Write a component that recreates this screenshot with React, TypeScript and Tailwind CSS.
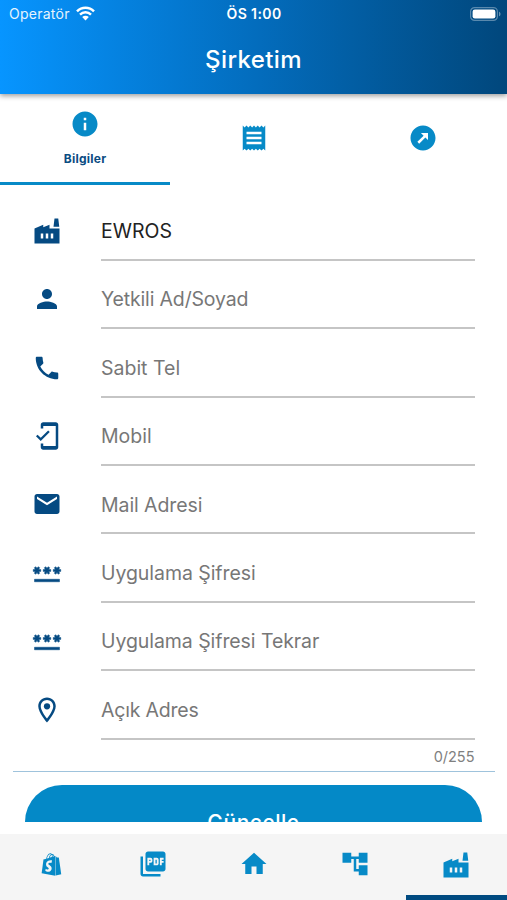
import type { IconType } from "react-icons";
import {
  MdInfo, MdReceipt, MdOutbound, MdFactory, MdPerson, MdPhone, MdMobileFriendly, MdEmail,
  MdPassword, MdOutlineLocationOn, MdPictureAsPdf, MdHome, MdAccountTree,
} from "react-icons/md";
import { FaShopify } from "react-icons/fa";

const fields: { icon: IconType; label: string; filled?: boolean; bold?: boolean; spacing: string }[] = [
  { icon: MdFactory, label: "EWROS", filled: true, spacing: "tracking-[0px]" },
  { icon: MdPerson, label: "Yetkili Ad/Soyad", spacing: "tracking-[-0.16px]" },
  { icon: MdPhone, label: "Sabit Tel", spacing: "tracking-[0px]" },
  { icon: MdMobileFriendly, label: "Mobil", spacing: "tracking-[0px]" },
  { icon: MdEmail, label: "Mail Adresi", spacing: "tracking-[-0.08px]" },
  { icon: MdPassword, label: "Uygulama Şifresi", bold: true, spacing: "tracking-[-0.06px]" },
  { icon: MdPassword, label: "Uygulama Şifresi Tekrar", bold: true, spacing: "tracking-[-0.07px]" },
  { icon: MdOutlineLocationOn, label: "Açık Adres", spacing: "tracking-[-0.2px]" },
];

const tabs: { icon: IconType; label?: string }[] = [
  { icon: MdInfo, label: "Bilgiler" },
  { icon: MdReceipt },
  { icon: MdOutbound },
];

const nav: IconType[] = [FaShopify, MdPictureAsPdf, MdHome, MdAccountTree, MdFactory];

function Wifi() {
  return (
    <svg width="19" height="15" viewBox="0 0 19 15" fill="none" stroke="white" strokeWidth="2.5">
      <path d="M1 5.4C5.8.6 13.2.6 18 5.4" />
      <path d="M4 8.6c3.1-3 7.9-3 11 0" />
      <path d="M6.2 11.1c1.9-1.7 4.7-1.7 6.6 0L9.5 14.4Z" fill="white" stroke="none" />
    </svg>
  );
}

function Battery() {
  return (
    <svg width="31" height="14" viewBox="0 0 31 14">
      <rect x=".6" y=".6" width="26.8" height="12.8" rx="4" fill="none" stroke="white" strokeOpacity=".35" strokeWidth="1.2" />
      <rect x="2.6" y="2.4" width="22.8" height="9.2" rx="2.3" fill="white" />
      <path d="M29 4.7c2 .7 2 3.9 0 4.6Z" fill="white" fillOpacity=".4" />
    </svg>
  );
}

export default function App() {
  return (
    <div className="flex h-[900px] w-[507px] flex-col overflow-hidden bg-white font-['Inter','Liberation_Sans',sans-serif]">
      <header className="z-10 flex h-[94px] shrink-0 flex-col bg-linear-to-r from-[#0795ff] via-[#036dbe] to-[#01477c] text-white shadow-[0_2px_5px_rgba(0,0,0,0.38)]">
        <div className="grid h-[28px] grid-cols-[1fr_auto_1fr] items-center pl-[9px] pr-[6px] text-[13.5px] leading-none">
          <div className="flex items-center gap-[6px]">
            <span className="text-[14px] tracking-[0.25px] opacity-90">Operatör</span>
            <div className="-mt-[2px]"><Wifi /></div>
          </div>
          <span className="-ml-[2px] text-center text-[14px] font-semibold tracking-[0.4px]">ÖS 1:00</span>
          <div className="flex justify-end pb-px"><Battery /></div>
        </div>
        <h1 className="mt-[17px] text-center text-[24px] font-medium leading-[30px] tracking-[0.4px]">Şirketim</h1>
      </header>

      <nav className="grid h-[90.5px] shrink-0 grid-cols-3">
        {tabs.map(({ icon: Icon, label }, i) => (
          <button
            key={i}
            className={
              label
                ? "-mr-px flex flex-col items-center border-b-[3px] border-[#078ac7] pt-[15px]"
                : "flex flex-col items-center pt-[29px]"
            }
          >
            <Icon size={30} color="#078ac7" />
            {label && (
              <span className="mt-[12px] text-[12px] font-bold leading-[15px] tracking-[0.25px] text-[#0b4c82]">
                {label}
              </span>
            )}
          </button>
        ))}
      </nav>

      <main className="flex h-[637.5px] shrink-0 flex-col overflow-hidden pt-2">
        {fields.map(({ icon: Icon, label, filled, bold, spacing }, i) => (
          <div key={i} className="flex h-[68.4px] shrink-0 pl-8 pr-8">
            <div className="flex w-[69px] shrink-0 pt-[23.4px]">
              <Icon
                size={30}
                color="#054a82"
                className={bold ? "[&>path:not([fill=none])]:stroke-[#054a82] [&>path:not([fill=none])]:stroke-[0.4px]" : ""}
              />
            </div>
            <div
              className={`flex-1 border-b-2 border-[#c5c5c5] pt-[25.5px] text-[19.5px] leading-[26px] ${spacing} ${filled ? "text-[#222222]" : "text-[#777777]"}`}
            >
              {label}
            </div>
          </div>
        ))}
        <div className="ml-[13px] mr-3 h-[32px] shrink-0 border-b border-[#9fc3dc] pr-[20.5px] pt-[7px] text-right text-[14.5px] leading-[20px] text-[#808080]">
          0/255
        </div>
        <button className="mx-[25px] mt-[13px] h-[74px] shrink-0 rounded-full bg-[#0489c7] pt-[2px] text-[21px] font-medium tracking-[0.5px] text-white">
          Güncelle
        </button>
      </main>

      <footer className="mt-auto grid h-[66px] shrink-0 grid-cols-5 bg-[#f5f5f5]">
        {nav.map((Icon, i) => (
          <button
            key={i}
            className={
              i === 4
                ? "flex justify-center border-b-[5px] border-[#004a80] pt-[16px]"
                : i === 0
                  ? "flex justify-center pl-[2px] pt-[19px]"
                  : i === 3
                    ? "flex justify-center pt-[15px]"
                    : "flex justify-center pl-px pt-[15px]"
            }
          >
            <Icon size={i === 0 ? 23 : 30} color="#078ac7" className={i === 0 ? "[&>path]:stroke-none" : ""} />
          </button>
        ))}
      </footer>
    </div>
  );
}
